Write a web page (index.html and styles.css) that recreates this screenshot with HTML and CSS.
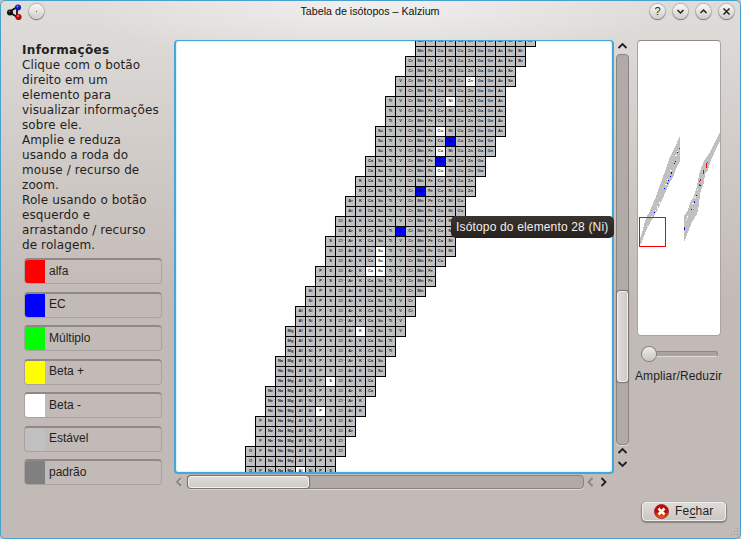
FILE: index.html
```html
<!DOCTYPE html>
<html lang="pt-BR">
<head>
<meta charset="utf-8">
<title>Tabela de isótopos – Kalzium</title>
<link rel="stylesheet" href="styles.css">
</head>
<body>
<div class="window">
  <header class="titlebar">
    <svg class="app-icon" width="16" height="17" viewBox="0 0 16 17"><path d="M3 8L11 3M3 8L11 13M11 3V13" stroke="#111" stroke-width="1.8"/><circle cx="4" cy="8.500" r="3" fill="#111"/><circle cx="12" cy="3.500" r="3" fill="#1414b8"/><circle cx="12.500" cy="13" r="3.1" fill="#b80808"/><circle cx="11.500" cy="2.5" r="1" fill="#7a7ae8"/><circle cx="12" cy="12" r="1" fill="#ee8080"/><circle cx="3.300" cy="7.500" r=".8" fill="#777"/></svg>
    <span class="round pin"><i></i></span>
    <h1 class="title">Tabela de isótopos – Kalzium</h1>
    <div class="controls">
      <span class="round">?</span>
      <span class="round"><svg width="15" height="15"><path d="M4.500 6L7.500 9L10.500 6"/></svg></span>
      <span class="round"><svg width="15" height="15"><path d="M4.500 9L7.500 6L10.500 9"/></svg></span>
      <span class="round"><svg width="15" height="15"><path d="M4.500 4.500L10.500 10.500M10.500 4.500L4.500 10.500"/></svg></span>
    </div>
  </header>
  <main class="content">
    <aside class="info">
      <div class="info-text"><b>Informações</b><br>Clique com o botão<br>direito em um<br>elemento para<br>visualizar informações<br>sobre ele.<br>Amplie e reduza<br>usando a roda do<br>mouse / recurso de<br>zoom.<br>Role usando o botão<br>esquerdo e<br>arrastando / recurso<br>de rolagem.</div>
      <ul class="legend">
        <li><i class="red"></i><span>alfa</span></li>
        <li><i class="blue"></i><span>EC</span></li>
        <li><i class="green"></i><span>Múltiplo</span></li>
        <li><i class="yellow"></i><span>Beta +</span></li>
        <li><i class="white"></i><span>Beta -</span></li>
        <li><i class="silver"></i><span>Estável</span></li>
        <li><i class="gray"></i><span>padrão</span></li>
      </ul>
    </aside>
    <section class="viewer">
      <div class="canvas"><div class="table" id="table"></div></div>
      <div class="tooltip">Isótopo do elemento 28 (Ni)</div>
      <div class="vbar">
        <svg width="13" height="11"><path class="arrow" d="M2.500 8L6.500 4L10.500 8"/></svg>
        <div class="groove"><div class="thumb"></div></div>
        <svg width="13" height="14"><path class="arrow" d="M2.500 8L6.500 4L10.500 8"/></svg>
        <svg width="13" height="13"><path class="arrow" d="M2.500 3L6.500 7L10.500 3"/></svg>
      </div>
      <div class="hbar">
        <svg width="13" height="14"><path class="arrow shade" d="M8 4L4 8L8 12"/><path class="arrow dim" d="M7 3L3 7L7 11"/></svg>
        <div class="groove"><div class="thumb"></div></div>
        <svg width="13" height="14"><path class="arrow dim" d="M8.500 3L4.500 7L8.500 11"/></svg>
        <svg width="13" height="14"><path class="arrow" d="M4.500 3L8.500 7L4.500 11"/></svg>
      </div>
    </section>
    <aside class="overview">
      <div class="map">
        <svg width="81" height="292" viewBox="639 42 81 292" shape-rendering="crispEdges">
          <g fill="#c0c0c0">
            <path d="M680 136V161L676 169L673 177L669 184L663 198L658 209L650 223L646 231L641 244H640V239L643 229L646 218L649 213L655 199L660 185L664 174L670 157L675 147Z"/>
            <path d="M720 132V141L716 149L712 158L708 170L705 174L704 183L700 193L699 205L697 214L692 222L688 232L685 241H684V216L688 210L690 203L694 196L697 186L700 171L704 161L710 152L714 144Z"/>
          </g>
          <g fill="#00f"><path d="M677 152h1v1h-1zM675 161h1v1h-1zM674 163h1v1h-1zM671 172h1v2h-1zM670 176h1v1h-1zM668 180h1v1h-1zM667 183h1v1h-1zM664 188h1v1h-1zM654 212h1v1h-1zM700 185h1v1h-1zM696 195h1v1h-1zM694 202h1v1h-1zM691 209h1v1h-1zM684 228h1v2h-1z"/></g>
          <g fill="#f00"><path d="M679 148h1v1h-1zM706 163h1v5h-1zM707 162h1v1h-1zM703 170h1v4h-1zM700 179h1v2h-1zM699 181h1v1h-1zM699 184h1v2h-1zM695 197h1v1h-1zM694 201h1v1h-1zM684 227h1v1h-1z"/></g>
          <g fill="#fff"><path d="M675 155h2v1h-2zM677 151h1v1h-1zM670 170h2v1h-2zM667 179h1v1h-1zM665 184h2v1h-2zM659 202h1v2h-1zM657 206h1v3h-1zM655 210h1v1h-1zM651 216h1v2h-1zM652 220h1v1h-1zM647 226h1v1h-1zM648 231h1v1h-1zM697 189h1v1h-1zM694 197h2v1h-2zM692 203h2v1h-2zM687 216h1v2h-1zM686 219h1v1h-1z"/></g>
          <rect x="639.500" y="217.500" width="26" height="29" fill="none" stroke="#f00"/>
        </svg>
      </div>
      <div class="slider"><div class="track"></div><span class="knob"></span></div>
      <div class="zoom-label">Ampliar/Reduzir</div>
    </aside>
  </main>
  <footer class="footer">
    <button class="close"><svg width="15" height="15"><defs><linearGradient id="r" x2="0" y2="1"><stop stop-color="#b90d0d"/><stop offset=".5" stop-color="#b51205"/><stop offset="1" stop-color="#ef6c14"/></linearGradient></defs><circle cx="7.500" cy="7.500" r="7" fill="url(#r)" stroke="#a31313" stroke-width=".8"/><path d="M4.500 4.500L10.500 10.500M10.500 4.500L4.500 10.500" stroke="#fff" stroke-width="2.600"/></svg><span>Fe<u>c</u>har</span></button>
    <svg class="grip" width="8" height="8" fill="#99928f"><path d="M6 0h1v1h-1zM3 3h1v1h-1zM6 3h1v1h-1zM0 6h1v1h-1zM3 6h1v1h-1zM6 6h1v1h-1z"/></svg>
  </footer>
</div>
<script src="table.js"></script>
</body>
</html>
```
FILE: styles.css
```css
* { box-sizing: border-box; }
body { margin: 0; background: #b9c9d2; color: #231f1e; font: 12px "Liberation Sans", sans-serif; }
.window { width: 741px; height: 539px; border: 1px solid #4aa0cc; border-radius: 5px; overflow: hidden; display: flex; flex-direction: column; background: radial-gradient(ellipse 300px 64px at 50% 0, #f1f0ef, rgba(240,239,238,0)), linear-gradient(#dfddda, #dbd8d5 45px, #c2bab6 300px); }
.titlebar { height: 39px; flex: none; display: flex; padding: 3px 6px 0 5px; position: relative; }
.app-icon { margin-right: 7px; }
.title { flex: 1; margin: 0; padding-top: 1px; font-size: 10.700px; line-height: 13px; font-weight: normal; text-align: center; color: #111; padding-left: 46px; }
.controls { display: flex; gap: 8px; }
.round { width: 15px; height: 15px; flex: none; border-radius: 50%; background: linear-gradient(#fafafa, #cfccc9); box-shadow: 0 1px 1px #777, 0 0 1px 1px #b5b1ae; font: 11px/15px "Liberation Sans", sans-serif; text-align: center; color: #222; }
.round svg { display: block; fill: none; stroke: #222; stroke-width: 1.500; }
.pin { display: flex; align-items: center; justify-content: center; }
.pin i { width: 1px; height: 1px; background: #555; }
.content { display: flex; height: 452px; flex: none; }
.info { width: 173px; padding: 3px 0 0 21px; flex: none; }
.info-text { height: 215px; font: 12px/15px "DejaVu Sans", sans-serif; letter-spacing: .1px; white-space: nowrap; }
.info-text b { letter-spacing: .35px; }
.legend { list-style: none; padding: 0; margin: 0 0 0 2px; display: grid; grid-template-rows: repeat(7, 26px); row-gap: 7.500px; width: 138px; }
.legend li { display: flex; align-items: center; border: 1px solid #aaa29e; border-top: 2px solid #8f8985; border-radius: 4px; overflow: hidden; }
.legend i { width: 20px; height: 100%; flex: none; margin-right: 4px; }
.legend span { padding-bottom: 2px; }
.red { background: #f00; } .blue { background: #00f; } .green { background: #0f0; } .yellow { background: #ff0; } .white { background: #fff; } .silver { background: silver; } .gray { background: gray; }
.viewer { width: 457px; flex: none; position: relative; display: grid; grid-template: 434px 18px / 440px 17px; }
.canvas { border: 2px solid #45a7d8; border-top-width: 1px; border-radius: 4px; background: #fff; overflow: hidden; box-shadow: inset 0 0 2px #8cd2f4; }
.table { margin-top: -5px; display: grid; grid-auto-rows: 10px; }
.row { display: flex; height: 11px; }
.cell { width: 11px; height: 11px; flex: none; margin-right: -1px; border: 1px solid #000; background: silver; font: bold 4px/8px "Liberation Sans", sans-serif; text-align: center; color: #222; }
.cell.beta { background: #fff; }
.cell.ec { background: #00f; color: #002; }
.tooltip { position: absolute; left: 277px; top: 176px; width: 163px; height: 22px; border-radius: 5px; background: linear-gradient(#3b342f, #27221f); color: #f1efed; font: 12px/22px "Liberation Sans", sans-serif; letter-spacing: .16px; padding-left: 5px; white-space: nowrap; }
.vbar { display: flex; flex-direction: column; padding-left: 2px; }
.vbar svg, .hbar svg { display: block; flex: none; }
.arrow { fill: none; stroke: #231f1e; stroke-width: 1.800; }
.arrow.dim { stroke: #8d8784; }
.arrow.shade { stroke: #e2dfdd; stroke-width: 1; }
.groove { border: 1px solid #8a8481; border-radius: 4px; background: #b2aaa7; box-shadow: 0 1px 0 #dedad8; box-sizing: border-box; }
.vbar .groove { width: 13px; height: 391px; margin-top: 3px; padding-top: 236px; }
.thumb { border: 1px solid #f3f1f0; border-radius: 3px; background: linear-gradient(90deg, #dedbd8, #cecac7); box-shadow: 0 0 1px 1px #77716e; }
.vbar .thumb { height: 91px; }
.hbar { display: flex; grid-column: 1 / 3; padding-top: 1px; }
.hbar .groove { width: 397px; height: 14px; }
.hbar .thumb { width: 121px; height: 12px; background: linear-gradient(#dedbd8, #cecac7); }
.overview { width: 90px; padding-left: 4px; }
.map { width: 84px; height: 296px; margin-left: 2px; border: 1px solid #aaa5a2; border-top-color: #8f8b88; border-radius: 4px; background: #fff; padding: 1px 0 0 1px; overflow: hidden; }
.map svg { display: block; }
.slider { height: 17px; margin: 9px 0 0 6px; width: 77px; position: relative; padding-top: 6px; }
.track { height: 6px; border: 1px solid #8e8885; border-bottom-color: #e0dcda; border-radius: 3px; background: #aaa29f; }
.knob { position: absolute; left: 1px; top: 2px; width: 14px; height: 14px; border-radius: 50%; background: linear-gradient(#eeecea, #c8c5c2); box-shadow: 0 0 0 1px #86817e; }
.zoom-label { margin-top: 7px; line-height: 14px; white-space: nowrap; letter-spacing: .12px; }
.footer { flex: 1; padding: 10px 14px 0 0; position: relative; display: flex; justify-content: flex-end; align-items: flex-start; }
.close { width: 84px; height: 19px; border: 1px solid #f0eeed; border-radius: 4px; background: linear-gradient(#dedbd9, #cbc7c4); box-shadow: 0 1px 1px 1px #8b8582; padding: 0 0 1px 11px; display: flex; align-items: center; gap: 6px; font: 12px "Liberation Sans", sans-serif; color: #231f1e; letter-spacing: .2px; }
.close u { text-underline-offset: 2px; }
.grip { position: absolute; right: 1px; bottom: 2px; }
```
FILE: table.js
```js
const symbols = "O F Ne Na Mg Al Si P S Cl Ar K Ca Sc Ti V Cr Mn Fe Co Ni Cu Zn Ga Ge As Se Br Kr".split(" ");

// One entry per row: first element, last element, then beta (b) and electron capture (e) cells.
const rows = `Mn Kr|Mn Br|Cr Br|Cr Se|V Se b:Zn|V As|Ti As b:Ni|Ti As|Ti As|Sc As b:Co|Sc Ge e:Ni|Sc Ge b:Co|Ca Ga e:Co|Ca Ga b:Co|K Zn|K Zn e:Mn|Ar Cu|Ar Cu|Cl Ni|Cl Ni e:V|S Ni|S Ni b:Sc|S Co b:Sc|P Fe b:Ca b:Sc|P Fe|Si Mn|Si Cr|Al Cr|Al V|Mg V b:K|Mg Ti|Mg Ti|Na Sc|Na Sc|Na Ca b:S|Ne Ca|Ne K|Ne K b:P|F Ar|F Ar|F Cl|O Cl|O S|O S b:Al`.split("|");

const table = document.getElementById("table");
for (const spec of rows) {
  const [first, last, ...marks] = spec.split(" ");
  const start = symbols.indexOf(first);
  const row = document.createElement("div");
  row.className = "row";
  row.style.paddingLeft = 69 + start * 10 + "px";
  for (const name of symbols.slice(start, symbols.indexOf(last) + 1)) {
    const cell = document.createElement("span");
    cell.className = "cell";
    if (marks.includes("b:" + name)) cell.classList.add("beta");
    if (marks.includes("e:" + name)) cell.classList.add("ec");
    cell.textContent = name;
    row.append(cell);
  }
  table.append(row);
}
```
